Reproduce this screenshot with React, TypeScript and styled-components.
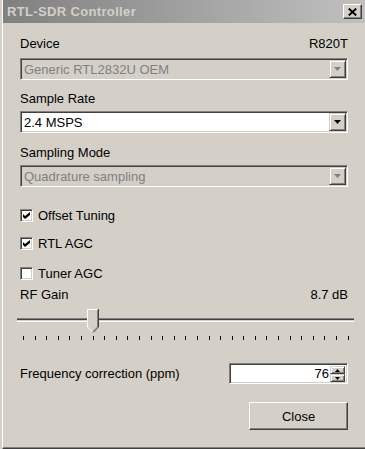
import * as React from 'react';
import styled, { createGlobalStyle } from 'styled-components';

const GlobalStyle = createGlobalStyle`
  html, body {
    margin: 0;
    padding: 0;
    background: #d4d0c8;
  }
  body {
    font-family: "Liberation Sans", Arial, sans-serif;
    font-size: 13px;
    color: #000;
  }
`;

const Frame = styled.div`
  width: 365px;
  height: 449px;
  box-sizing: border-box;
  padding-left: 2px;
  background: #d4d0c8;
  overflow: hidden;
`;

const Window = styled.div`
  height: 100%;
  box-sizing: border-box;
  border-left: 1px solid #fff;
  border-bottom: 1px solid #404040;
  box-shadow: inset 0 -1px 0 #808080;
  display: flex;
  flex-direction: column;
`;

const TitleBar = styled.div`
  height: 23px;
  flex: none;
  display: flex;
  align-items: center;
  justify-content: space-between;
  padding: 0 3px 0 4px;
  background: linear-gradient(to right, #808080, #c0c0c0);
`;

const Title = styled.span`
  font-weight: bold;
  font-size: 13px;
  letter-spacing: 0.35px;
  color: #d4d0c8;
`;

const CaptionButton = styled.div`
  width: 19px;
  height: 15px;
  box-sizing: border-box;
  background: #d4d0c8;
  border: 1px solid;
  border-color: #fff #404040 #404040 #fff;
  box-shadow: inset -1px -1px 0 #808080;
  display: flex;
  align-items: center;
  justify-content: center;
`;

const Body = styled.div`
  flex: 1;
  display: flex;
  flex-direction: column;
  padding: 0 17px;
`;

const LabelRow = styled.div<{ $mt: number; $mb: number }>`
  display: flex;
  justify-content: space-between;
  line-height: 15px;
  height: 15px;
  margin-top: ${p => p.$mt}px;
  margin-bottom: ${p => p.$mb}px;
`;

const Combo = styled.div<{ $disabled?: boolean }>`
  height: 22px;
  box-sizing: border-box;
  display: flex;
  align-items: stretch;
  border: 1px solid;
  border-color: #808080 #fff #fff #808080;
  box-shadow: inset 1px 1px 0 #404040, inset -1px -1px 0 #d4d0c8;
  padding: 1px;
  background: ${p => (p.$disabled ? '#d4d0c8' : '#fff')};
`;

const ComboText = styled.div<{ $disabled?: boolean }>`
  flex: 1;
  display: flex;
  align-items: center;
  padding-left: 2px;
  color: ${p => (p.$disabled ? '#808080' : '#000')};
`;

const ArrowButton = styled.div`
  width: 17px;
  box-sizing: border-box;
  background: #d4d0c8;
  border: 1px solid;
  border-color: #d4d0c8 #404040 #404040 #d4d0c8;
  box-shadow: inset 1px 1px 0 #fff, inset -1px -1px 0 #808080;
  display: flex;
  align-items: center;
  justify-content: center;
`;

const CheckRow = styled.label<{ $mt: number }>`
  display: flex;
  align-items: center;
  gap: 5px;
  height: 13px;
  line-height: 15px;
  margin-top: ${p => p.$mt}px;
`;

const CheckBox = styled.span`
  width: 13px;
  height: 13px;
  box-sizing: border-box;
  flex: none;
  background: #fff;
  border: 1px solid;
  border-color: #808080 #fff #fff #808080;
  box-shadow: inset 1px 1px 0 #404040, inset -1px -1px 0 #d4d0c8;
  display: flex;
  align-items: center;
  justify-content: center;
`;

const Slider = styled.div`
  position: relative;
  height: 35px;
  margin: 3px -6px 0 -3px;
`;

const Track = styled.div`
  height: 4px;
  margin-top: 13px;
  box-sizing: border-box;
  border-top: 1px solid #808080;
  border-bottom: 1px solid #fff;
  background: #404040;
  box-shadow: inset 0 -1px 0 #d4d0c8;
`;

const Thumb = styled.svg`
  position: absolute;
  top: 4px;
`;

const Ticks = styled.div`
  display: flex;
  justify-content: space-between;
  padding: 0 5px 0 6px;
  margin-top: 14px;
`;

const Tick = styled.span`
  width: 1px;
  height: 4px;
  background: #000;
`;

const FreqRow = styled.div`
  display: flex;
  align-items: center;
  justify-content: space-between;
  margin-top: 23px;
  line-height: 15px;
`;

const Spinner = styled.div`
  width: 119px;
  height: 21px;
  box-sizing: border-box;
  display: flex;
  border: 1px solid;
  border-color: #808080 #fff #fff #808080;
  box-shadow: inset 1px 1px 0 #404040, inset -1px -1px 0 #d4d0c8;
  padding: 2px 2px 1px 1px;
  background: #fff;
`;

const SpinValue = styled.div`
  flex: 1;
  text-align: right;
  line-height: 15px;
  padding-right: 1px;
`;

const SpinButtons = styled.div`
  width: 15px;
  display: flex;
  flex-direction: column;
`;

const SpinButton = styled.div`
  flex: 1;
  box-sizing: border-box;
  background: #d4d0c8;
  border: 1px solid;
  border-color: #d4d0c8 #404040 #404040 #d4d0c8;
  box-shadow: inset 1px 1px 0 #fff, inset -1px -1px 0 #808080;
  display: flex;
  align-items: center;
  justify-content: center;
`;

const PushButton = styled.button`
  align-self: flex-end;
  width: 99px;
  height: 28px;
  margin-top: 18px;
  box-sizing: border-box;
  font: inherit;
  color: #000;
  background: #d4d0c8;
  border: 1px solid;
  border-color: #fff #404040 #404040 #fff;
  box-shadow: inset -1px -1px 0 #808080;
  padding: 0;
`;

const DownArrow = ({ color }: { color: string }) => (
  <svg width="7" height="4" viewBox="0 0 7 4">
    <path d="M0 0h7L3.5 4z" fill={color} />
  </svg>
);

const SmallArrow = ({ up }: { up?: boolean }) => (
  <svg width="5" height="3" viewBox="0 0 5 3">
    <path d={up ? 'M2.5 0L5 3H0z' : 'M0 0h5L2.5 3z'} fill="#000" />
  </svg>
);

const CheckMark = () => (
  <svg width="7" height="7" viewBox="0 0 7 7">
    <path d="M0 2l2 2 5-4v3l-5 4-2-2z" fill="#000" />
  </svg>
);

const GAIN_STEPS = 29;
const gainIndex = 6;

const App = () => {
  const thumbLeft = 6 + (gainIndex * 325) / (GAIN_STEPS - 1) - 6;
  return (
    <>
      <GlobalStyle />
      <Frame>
        <Window>
          <TitleBar>
            <Title>RTL-SDR Controller</Title>
            <CaptionButton>
              <svg width="9" height="8" viewBox="0 0 9 8">
                <path d="M0.8 0.6l7.4 6.8M8.2 0.6l-7.4 6.8" stroke="#000" strokeWidth="2" />
              </svg>
            </CaptionButton>
          </TitleBar>
          <Body>
            <LabelRow $mt={13} $mb={7}>
              <span>Device</span>
              <span>R820T</span>
            </LabelRow>
            <Combo $disabled>
              <ComboText $disabled>Generic RTL2832U OEM</ComboText>
              <ArrowButton>
                <DownArrow color="#808080" />
              </ArrowButton>
            </Combo>

            <LabelRow $mt={11} $mb={5}>
              <span>Sample Rate</span>
            </LabelRow>
            <Combo>
              <ComboText>2.4 MSPS</ComboText>
              <ArrowButton>
                <DownArrow color="#000" />
              </ArrowButton>
            </Combo>

            <LabelRow $mt={12} $mb={5}>
              <span>Sampling Mode</span>
            </LabelRow>
            <Combo $disabled>
              <ComboText $disabled>Quadrature sampling</ComboText>
              <ArrowButton>
                <DownArrow color="#808080" />
              </ArrowButton>
            </Combo>

            <CheckRow $mt={22}>
              <CheckBox>
                <CheckMark />
              </CheckBox>
              Offset Tuning
            </CheckRow>
            <CheckRow $mt={15}>
              <CheckBox>
                <CheckMark />
              </CheckBox>
              RTL AGC
            </CheckRow>
            <CheckRow $mt={17}>
              <CheckBox />
              Tuner AGC
            </CheckRow>

            <LabelRow $mt={7} $mb={0}>
              <span>RF Gain</span>
              <span>8.7 dB</span>
            </LabelRow>
            <Slider>
              <Track />
              <Thumb width="12" height="24" viewBox="0 0 12 24" style={{ left: thumbLeft }}>
                <path d="M0 0h12v18l-6 6-6-6z" fill="#d4d0c8" />
                <path d="M0.5 18V0.5h10" stroke="#fff" fill="none" />
                <path d="M0.5 18l5.5 5.5" stroke="#fff" fill="none" />
                <path d="M11.5 0v18l-5.5 5.5" stroke="#404040" fill="none" />
                <path d="M10.5 1v17l-4.5 4.5" stroke="#808080" fill="none" />
              </Thumb>
              <Ticks>
                {Array.from({ length: GAIN_STEPS }, (_, i) => (
                  <Tick key={i} />
                ))}
              </Ticks>
            </Slider>

            <FreqRow>
              <span>Frequency correction (ppm)</span>
              <Spinner>
                <SpinValue>76</SpinValue>
                <SpinButtons>
                  <SpinButton>
                    <SmallArrow up />
                  </SpinButton>
                  <SpinButton>
                    <SmallArrow />
                  </SpinButton>
                </SpinButtons>
              </Spinner>
            </FreqRow>

            <PushButton>Close</PushButton>
          </Body>
        </Window>
      </Frame>
    </>
  );
};

export default App;
